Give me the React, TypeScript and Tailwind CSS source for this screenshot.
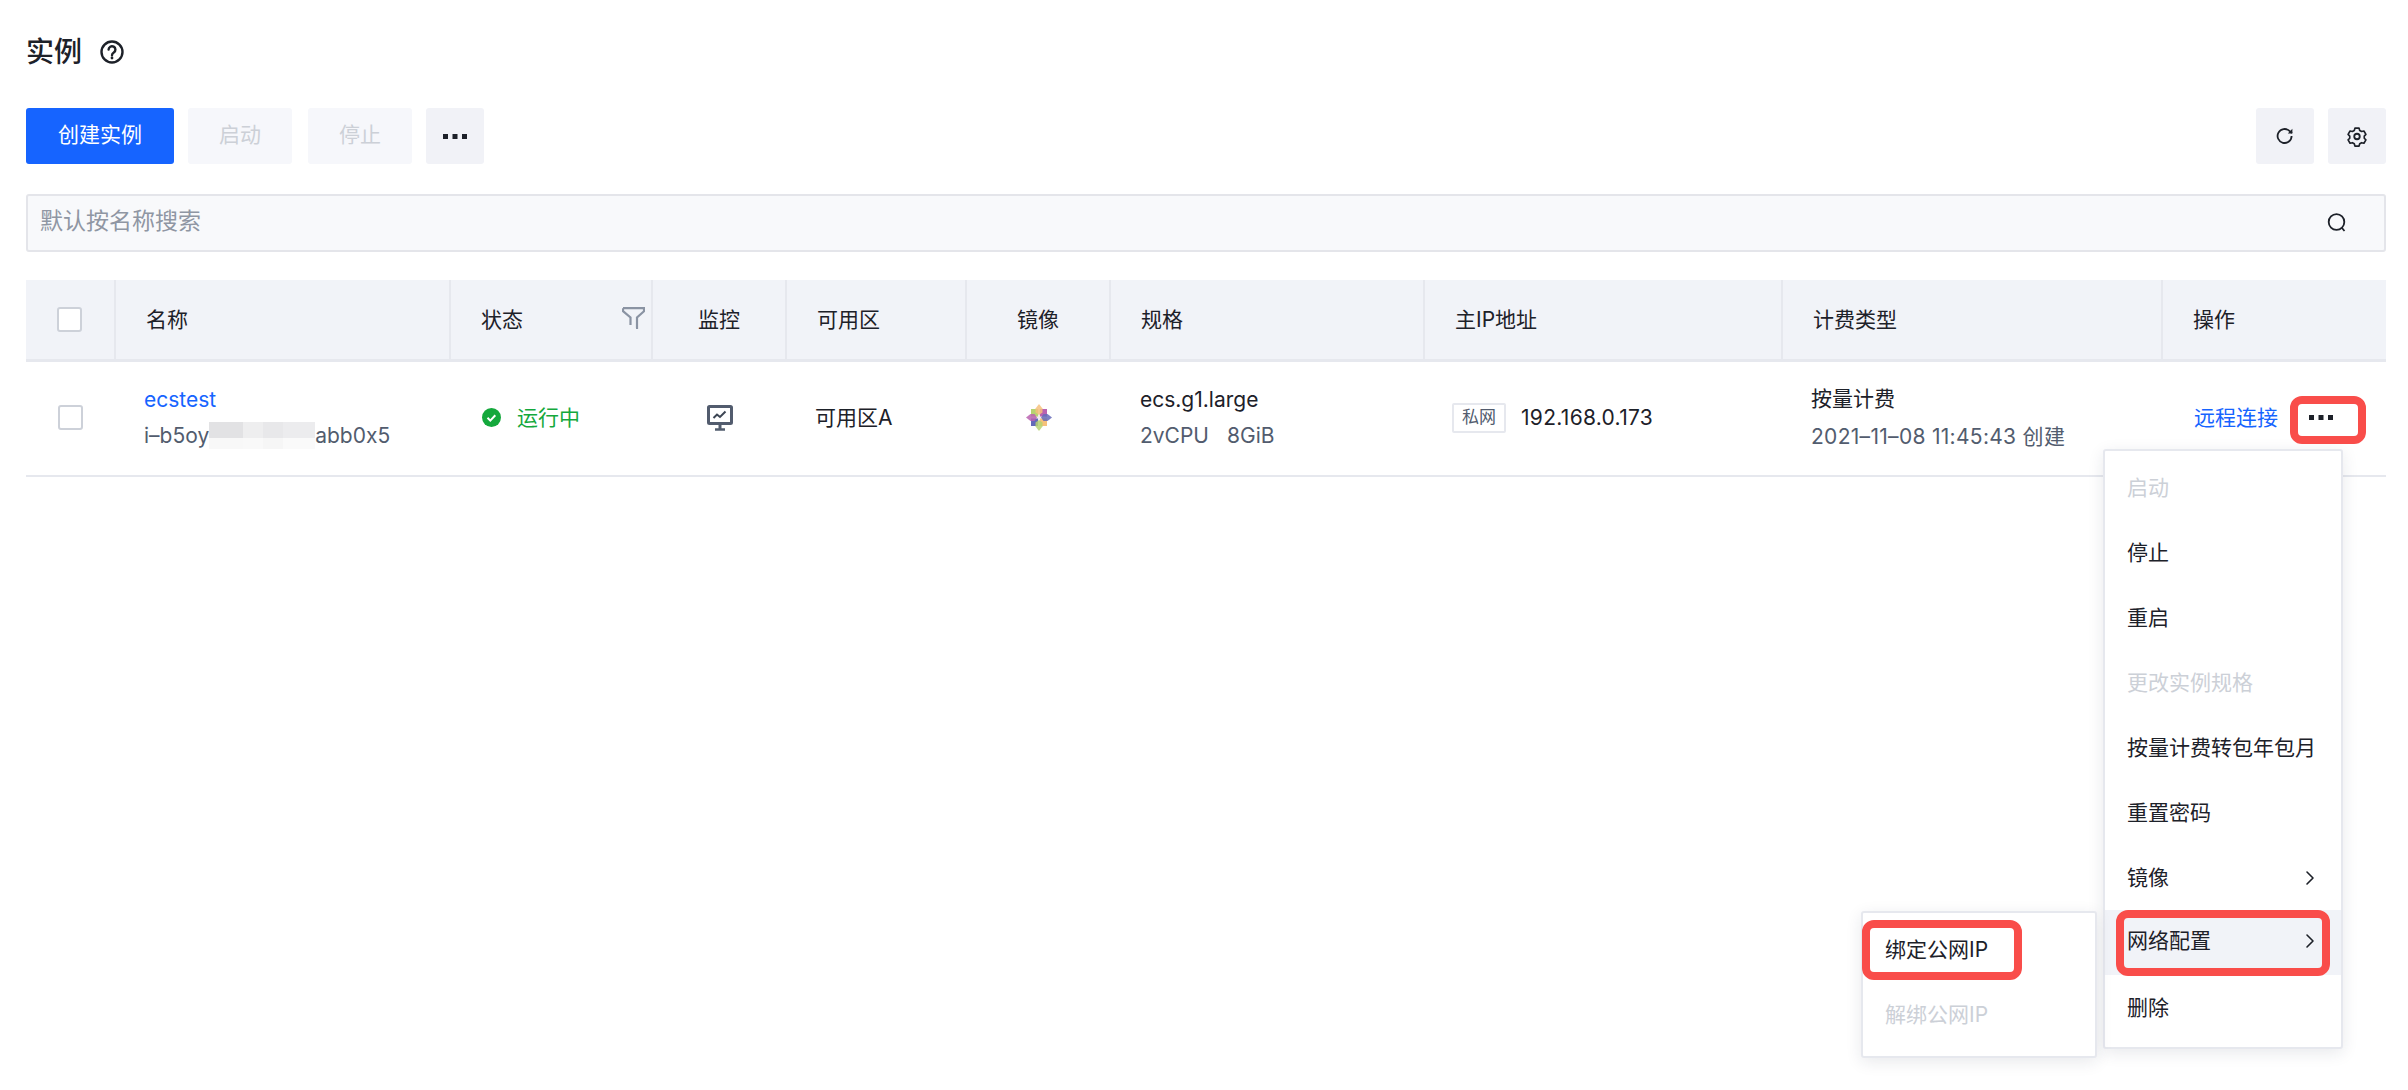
import { ReactNode } from "react";
import { ChevronRight } from "lucide-react";

const FONT = "font-['Inter','Noto_Sans_CJK_SC',sans-serif]";

const Dots = () => (
  <svg width="24" height="5" viewBox="0 0 24 5" fill="#1d2129">
    <rect x="0" y="0" width="5" height="5" />
    <rect x="9.500" y="0" width="5" height="5" />
    <rect x="19" y="0" width="5" height="5" />
  </svg>
);

const HelpIcon = () => (
  <svg width="24" height="24" viewBox="0 0 24 24" fill="none" stroke="#1d2129" strokeWidth="2.400">
    <circle cx="12" cy="12" r="10.500" />
    <path d="M8.600 9.600a3.400 3.400 0 1 1 5.200 2.900c-1.200.8-1.800 1.400-1.800 2.700" strokeLinecap="round" />
    <circle cx="12" cy="18" r="1.400" fill="#1d2129" stroke="none" />
  </svg>
);

const RefreshIcon = () => (
  <svg width="20" height="20" viewBox="0 0 20 20" fill="none" stroke="#1d2129" strokeWidth="1.800">
    <path d="M16.600 10a7 7 0 1 1-2.200-5.100L17 7" />
    <path d="M17.400 2.800V7.400h-4.600" fill="#1d2129" stroke="none" />
  </svg>
);

const GearIcon = () => (
  <svg width="22" height="22" viewBox="0 0 24 24" fill="none" stroke="#1d2129" strokeWidth="2" strokeLinejoin="round">
    <path d="M9.500 2.500h5l.8 2.800 2.300 1.300 2.800-.7 2.400 4.200-2 2v2.600l2 2-2.400 4.100-2.800-.7-2.300 1.300-.8 2.800h-5l-.8-2.800-2.300-1.300-2.800.7-2.400-4.100 2-2v-2.600l-2-2L3.600 5.900l2.800.7 2.300-1.300z" transform="translate(1.200 1.200) scale(.9)" />
    <circle cx="12" cy="12.500" r="3" />
  </svg>
);

const SearchIcon = () => (
  <svg width="20" height="20" viewBox="0 0 20 20" fill="none" stroke="#1d2129" strokeWidth="1.800">
    <circle cx="9.500" cy="9" r="7.800" />
    <path d="M15 15l2.500 3" />
  </svg>
);

const FilterIcon = () => (
  <svg width="23" height="22" viewBox="0 0 23 22" fill="none" stroke="#8a93a3" strokeWidth="2.200">
    <path d="M1 1.200h21v3l-7 6.300V21h-1" />
    <path d="M1 1.200v3l7.500 6.300V18" />
  </svg>
);

const MonitorIcon = () => (
  <svg width="26" height="26" viewBox="0 0 26 26" fill="none" stroke="#525c6e" strokeWidth="3">
    <rect x="1.500" y="1.500" width="23" height="17" rx="1" />
    <path d="M6.500 13l3.500-3.500 3 2.500 5.500-5.500" strokeWidth="2" stroke="#3c4554" />
    <path d="M13 18.500V24" />
    <path d="M8 24.500h10" strokeWidth="2.500" />
  </svg>
);

const CentosIcon = () => (
  <svg width="26" height="27" viewBox="0 0 26 27" className="blur-[0.7px] opacity-80">
    <rect x="5" y="5" width="16" height="17" fill="#ece8ec" />
    <rect x="5" y="5" width="7" height="7.500" fill="#a6c94f" />
    <rect x="14" y="5" width="7" height="7.500" fill="#a83c9e" />
    <rect x="5" y="14.500" width="7" height="7.500" fill="#3f45a8" />
    <rect x="14" y="14.500" width="7" height="7.500" fill="#f4b25c" />
    <path d="M13 0l3.500 4.500v4L13 11 9.500 8.500v-4z" fill="#f4b25c" opacity=".85" />
    <path d="M26 13.500L21.500 17h-4L15 13.500l2.500-3.500h4z" fill="#3f45a8" opacity=".85" />
    <path d="M13 27l-3.500-4.500v-4L13 16l3.500 2.500v4z" fill="#a6c94f" opacity=".85" />
    <path d="M0 13.500L4.500 10h4l2.500 3.500L8.500 17h-4z" fill="#a83c9e" opacity=".85" />
  </svg>
);

const CheckCircle = () => (
  <svg width="19" height="19" viewBox="0 0 19 19">
    <circle cx="9.500" cy="9.500" r="9.500" fill="#14a83c" />
    <path d="M5.500 9.800l2.800 2.800 5-5.300" fill="none" stroke="#fff" strokeWidth="2" />
  </svg>
);

const Checkbox = () => (
  <span className="block w-[25px] h-[25px] -ml-[1px] rounded-[3px] border-2 border-[#cdd1d9] bg-white" />
);

// masked part of the instance id
const Mosaic = () => (
  <span className="inline-grid grid-cols-[34px_20px_20px_32px] grid-rows-[16px_11px] w-[106px] h-[27px] align-middle">
    <span className="bg-[#e2e2e4]" />
    <span className="bg-[#eeeeef]" />
    <span className="bg-[#e8e8ea]" />
    <span className="bg-[#ececee]" />
    <span className="bg-[#f8f8f8]" />
    <span className="bg-[#f9f9f9]" />
    <span className="bg-[#f6f6f6]" />
    <span className="bg-[#fafafa]" />
  </span>
);

const columns = [
  { key: "check", width: "w-[90px]" },
  { key: "名称", width: "w-[335px]" },
  { key: "状态", width: "w-[202px]" },
  { key: "监控", width: "w-[134px]" },
  { key: "可用区", width: "w-[180px]" },
  { key: "镜像", width: "w-[144px]" },
  { key: "规格", width: "w-[314px]" },
  { key: "主IP地址", width: "w-[358px]" },
  { key: "计费类型", width: "w-[380px]" },
  { key: "操作", width: "flex-1" },
];

function HeaderCell({ label, width, last }: { label: string; width: string; last: boolean }) {
  const center = label === "check" || label === "监控" || label === "镜像";
  return (
    <div
      className={`${width} h-full relative flex items-center ${center ? "justify-center" : "pl-[30px]"} ${
        last ? "" : "border-r-2 border-[#e6e8ee]"
      }`}
    >
      {label === "check" ? <Checkbox /> : label}
      {label === "状态" && (
        <span className="absolute right-[6px] top-[27px] flex">
          <FilterIcon />
        </span>
      )}
    </div>
  );
}

function MenuItem({
  children,
  disabled,
  active,
  arrow,
}: {
  children: ReactNode;
  disabled?: boolean;
  active?: boolean;
  arrow?: boolean;
}) {
  return (
    <div
      className={`h-[65px] pl-[22px] pr-[22px] flex items-center justify-between ${
        disabled ? "text-[#ccd0d7]" : "text-[#1d2129]"
      } ${active ? "pb-[3px] bg-[#f1f3f8]" : ""}`}
    >
      <span>{children}</span>
      {arrow && <ChevronRight size={24} strokeWidth={1.6} color="#1d2129" className="-mr-[3px]" />}
    </div>
  );
}

const RedBox = ({ className }: { className: string }) => (
  <div className={`absolute border-[8px] border-[#f94d4a] rounded-[12px] ${className}`} />
);

export default function App() {
  return (
    <div className={`${FONT} relative w-full h-[1090px] bg-white text-[21px] text-[#1d2129] overflow-hidden pl-[26px] pr-[22px]`}>
      {/* Title */}
      <div className="pt-[32px] h-[108px]">
        <div className="flex items-center gap-[18px] h-[40px]">
          <span className="text-[28px] font-medium">实例</span>
          <HelpIcon />
        </div>
      </div>

      {/* Toolbar */}
      <div className="flex items-center h-[56px]">
        <button className="w-[148px] h-full pb-[2px] rounded-[3px] bg-[#1664ff] text-white">创建实例</button>
        <button className="ml-[14px] w-[104px] h-full pb-[2px] rounded-[3px] bg-[#f6f7fb] text-[#ccd0d7]">启动</button>
        <button className="ml-[16px] w-[104px] h-full pb-[2px] rounded-[3px] bg-[#f6f7fb] text-[#ccd0d7]">停止</button>
        <button className="ml-[14px] w-[58px] h-full rounded-[3px] bg-[#f1f2f7] flex items-center justify-center">
          <Dots />
        </button>
        <div className="ml-auto flex gap-[14px] h-full">
          <button className="w-[58px] h-full rounded-[3px] bg-[#f1f2f7] flex items-center justify-center">
            <RefreshIcon />
          </button>
          <button className="w-[58px] h-full rounded-[3px] bg-[#f1f2f7] flex items-center justify-center">
            <GearIcon />
          </button>
        </div>
      </div>

      {/* Search */}
      <div className="mt-[30px] h-[58px] rounded-[3px] border-2 border-[#e4e5ea] bg-[#f8f9fb] flex items-center justify-between pl-[12px] pr-[37px] text-[23px] text-[#8f96a3]">
        <span className="-mt-[3px]">默认按名称搜索</span>
        <SearchIcon />
      </div>

      {/* Table */}
      <div className="mt-[28px]">
        <div className="flex items-center h-[82px] bg-[#f1f3f8] border-b-[3px] border-[#e6e8ee]">
          {columns.map((c, i) => (
            <HeaderCell key={c.key} label={c.key} width={c.width} last={i === columns.length - 1} />
          ))}
        </div>
        <div className="flex items-center h-[115px] pb-[2px] border-b-2 border-[#e6e8ee]">
          <div className="w-[90px] flex justify-center">
            <Checkbox />
          </div>
          <div className="w-[335px] pl-[28px] leading-[36px]">
            <div className="text-[#1664ff]">ecstest</div>
            <div className="text-[#525c6e] flex items-center">
              i–b5oy
              <Mosaic />
              abb0x5
            </div>
          </div>
          <div className="w-[202px] pl-[31px] flex items-center gap-[16px] text-[#14a83c]">
            <CheckCircle />
            运行中
          </div>
          <div className="w-[134px] flex justify-center">
            <MonitorIcon />
          </div>
          <div className="w-[180px] pl-[28px]">可用区A</div>
          <div className="w-[144px] flex justify-center">
            <CentosIcon />
          </div>
          <div className="w-[314px] pl-[29px] leading-[36px]">
            <div>ecs.g1.large</div>
            <div className="text-[#525c6e] flex gap-[18px]">
              <span>2vCPU</span>
              <span>8GiB</span>
            </div>
          </div>
          <div className="w-[358px] pl-[27px] flex items-center gap-[15px]">
            <span className="w-[54px] h-[30px] border-2 border-[#e6e8ee] rounded-[2px] flex items-center justify-center text-[17px] text-[#525c6e]">
              私网
            </span>
            <span className="tracking-[0.3px]">192.168.0.173</span>
          </div>
          <div className="w-[380px] pl-[28px] leading-[38px]">
            <div>按量计费</div>
            <div className="text-[#525c6e] tracking-[0.3px]">2021–11–08 11:45:43 创建</div>
          </div>
          <div className="flex-1 pl-[31px] flex items-center">
            <span className="text-[#1664ff]">远程连接</span>
            <span className="ml-[31px] flex">
              <Dots />
            </span>
          </div>
        </div>
      </div>

      {/* Dropdown */}
      <div className="absolute left-[2103px] top-[449px] w-[240px] h-[600px] pt-[4px] bg-white border-2 border-[#e6e8ee] rounded-[3px] shadow-[0_4px_16px_rgba(30,40,70,0.1)]">
        <MenuItem disabled>启动</MenuItem>
        <MenuItem>停止</MenuItem>
        <MenuItem>重启</MenuItem>
        <MenuItem disabled>更改实例规格</MenuItem>
        <MenuItem>按量计费转包年包月</MenuItem>
        <MenuItem>重置密码</MenuItem>
        <MenuItem arrow>镜像</MenuItem>
        <MenuItem arrow active>
          网络配置
        </MenuItem>
        <MenuItem>删除</MenuItem>
      </div>

      {/* Submenu */}
      <div className="absolute left-[1861px] top-[911px] w-[236px] h-[147px] pt-[4px] bg-white border-2 border-[#e6e8ee] rounded-[3px] shadow-[0_4px_16px_rgba(30,40,70,0.1)]">
        <MenuItem>绑定公网IP</MenuItem>
        <MenuItem disabled>解绑公网IP</MenuItem>
      </div>

      {/* Annotations */}
      <RedBox className="left-[2290px] top-[396px] w-[76px] h-[48px]" />
      <RedBox className="left-[2116px] top-[910px] w-[214px] h-[66px]" />
      <RedBox className="left-[1862px] top-[920px] w-[160px] h-[60px]" />
    </div>
  );
}
